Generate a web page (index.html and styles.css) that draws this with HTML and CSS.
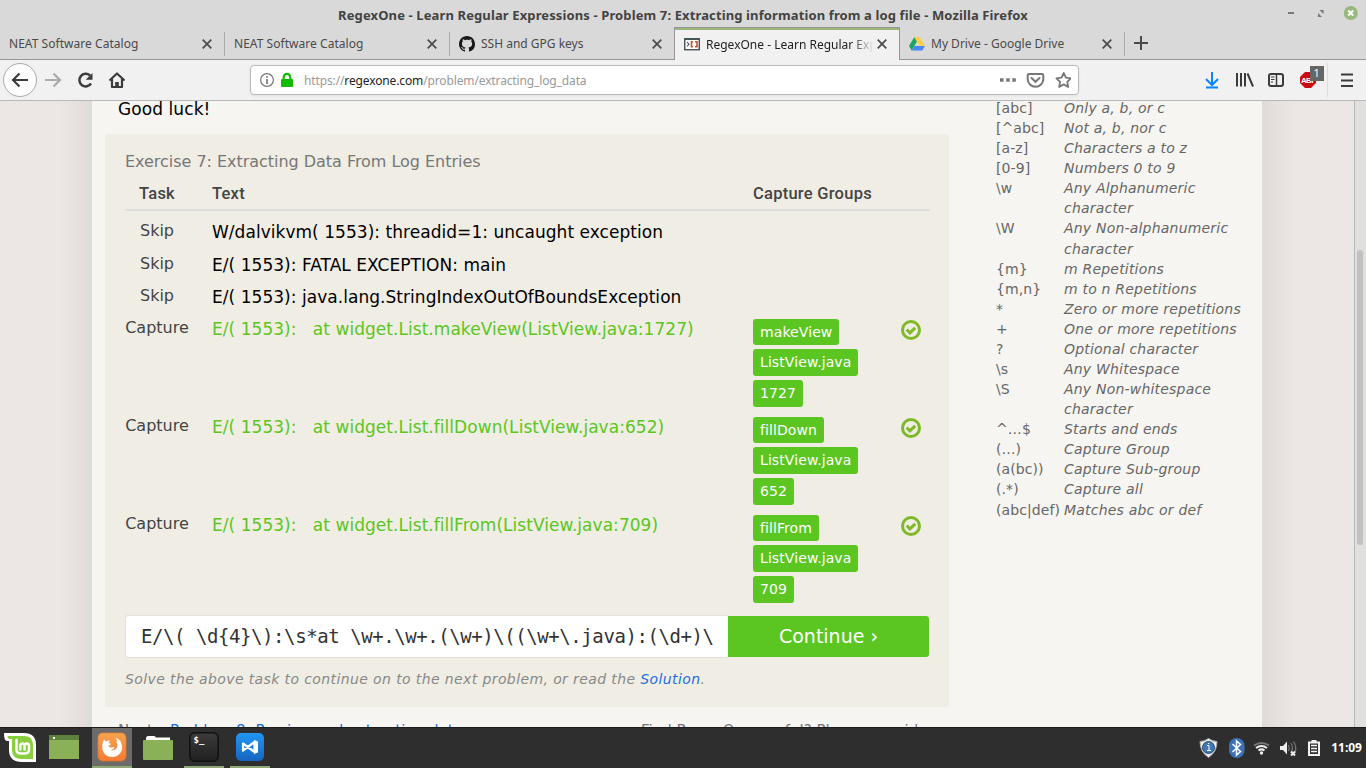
FILE: index.html
```html
<!DOCTYPE html>
<html lang="en">
<head>
<meta charset="utf-8">
<title>RegexOne - Learn Regular Expressions</title>
<link rel="stylesheet" href="styles.css">
</head>
<body>
<header class="titlebar">
  <span class="window-title">RegexOne - Learn Regular Expressions - Problem 7: Extracting information from a log file - Mozilla Firefox</span>
  <svg class="window-buttons" width="76" height="20" viewBox="0 0 76 20"><path d="M0 10.500h6" transform="translate(0 -.5)" stroke="#777" stroke-width="2"/><path d="M30 14v-4l4 4zM35.500 7v4l-4-4z" fill="#777"/><circle cx="62.800" cy="10" r="7" fill="#9ab87c"/><path d="M60.200 7.500l5 5m0-5l-5 5" stroke="#fff" stroke-width="1.900"/></svg>
</header>
<nav class="tabs">
  <div class="tab"><span class="tab-label catalog">NEAT Software Catalog</span><svg class="close" viewBox="0 0 10 10"><path d="M.7.7l8.600 8.600m0-8.600L.7 9.300"/></svg></div>
  <div class="tab"><span class="tab-label catalog">NEAT Software Catalog</span><svg class="close" viewBox="0 0 10 10"><path d="M.7.7l8.600 8.600m0-8.600L.7 9.300"/></svg></div>
  <div class="tab before-active"><svg class="favicon" viewBox="0 0 16 16"><path fill="#191717" d="M8 0C3.580 0 0 3.580 0 8c0 3.540 2.290 6.530 5.470 7.590.4.070.55-.17.55-.38 0-.19-.01-.82-.01-1.490-2.010.37-2.530-.49-2.690-.94-.09-.23-.48-.94-.82-1.130-.28-.15-.68-.52-.01-.53.63-.01 1.080.58 1.230.82.72 1.210 1.870.87 2.330.66.070-.52.280-.87.510-1.070-1.780-.2-3.640-.89-3.640-3.950 0-.87.310-1.590.82-2.150-.08-.2-.36-1.020.08-2.120 0 0 .67-.21 2.200.82.64-.18 1.320-.27 2-.27s1.360.09 2 .27c1.530-1.040 2.200-.82 2.200-.82.440 1.100.160 1.920.080 2.120.51.560.82 1.270.82 2.150 0 3.070-1.870 3.750-3.650 3.950.29.250.54.730.54 1.480 0 1.070-.01 1.930-.01 2.200 0 .21.150.46.55.38A8 8 0 0 0 16 8c0-4.420-3.580-8-8-8z"/></svg><span class="tab-label">SSH and GPG keys</span><svg class="close" viewBox="0 0 10 10"><path d="M.7.7l8.600 8.600m0-8.600L.7 9.300"/></svg></div>
  <div class="tab active"><svg class="favicon" viewBox="0 0 16 16"><rect x=".7" y="2.700" width="14.600" height="11" fill="#fff" stroke="#45535b" stroke-width="1.400"/><path d="M0 3h16" stroke="#45535b" stroke-width="2"/><path d="M3 6l2 2.300L3 10.500" fill="none" stroke="#45535b" stroke-width="1.100"/><path d="M9 5.800H7.500v5H9M11 5.800h2v5h-2" fill="none" stroke="#c8502e" stroke-width="1.600"/></svg><span class="tab-label">RegexOne - Learn Regular Expressions</span><svg class="close" viewBox="0 0 10 10"><path d="M.7.7l8.600 8.600m0-8.600L.7 9.300"/></svg></div>
  <div class="tab"><svg class="favicon" viewBox="0 0 16 16"><path d="M5.300 1L0 10l2.700 4.500L8 5.500z" fill="#1da362"/><path d="M5.300 1h5.400L16 10h-5.300z" fill="#ffcf48"/><path d="M5.500 10H16l-2.700 4.500H2.700z" fill="#4688f4"/></svg><span class="tab-label">My Drive - Google Drive</span><svg class="close" viewBox="0 0 10 10"><path d="M.7.7l8.600 8.600m0-8.600L.7 9.300"/></svg></div>
  <svg class="new-tab" viewBox="0 0 14 14"><path d="M7 0v14M0 7h14" stroke="#4a4a4a" stroke-width="2"/></svg>
</nav>
<div class="toolbar">
  <svg class="nav-left" width="130" height="40" viewBox="0 0 130 40" fill="none" stroke="#3c3c3c" stroke-width="2.200"><circle cx="20" cy="20" r="16.500" fill="#fcfcfc" stroke="#aaa" stroke-width="1"/><path d="M28 20H13m6.500-6.500L13 20l6.500 6.500"/><path d="M45 20h15m-6.500-6.500L60 20l-6.500 6.500" stroke="#ababab"/><path d="M91 23.500a6.300 6.300 0 1 1-1-8" stroke-width="2.500"/><path d="M92.500 13v6.800h-6.800z" fill="#3c3c3c" stroke="none"/><path d="M109.500 20.500l7.500-7 7.500 7M112 19v8h10v-8" stroke-linejoin="round"/><path d="M117 27v-5" stroke-width="3.600"/></svg>
  <div class="urlbar">
    <svg width="36" height="20" viewBox="0 0 36 20"><circle cx="7" cy="10" r="6.400" fill="none" stroke="#777" stroke-width="1.200"/><path d="M7 9v5M7 6v1.800" stroke="#777" stroke-width="1.700"/><path d="M23.700 10V7.200a3.300 3.300 0 0 1 6.600 0V10" fill="none" stroke="#12bc00" stroke-width="2.200"/><rect x="21" y="9" width="12" height="8" rx="1" fill="#12bc00"/></svg>
    <span class="url">https://<b>regexone.com</b>/problem/extracting_log_data</span>
    <svg class="url-actions" width="74" height="20" viewBox="0 0 74 20" fill="none" stroke="#777" stroke-width="2"><g transform="translate(2)"><path d="M1 10h3.500M7.200 10h3.500M13.300 10h3.500" stroke-width="3.500"/><path d="M30 4h13q1.300 0 1.300 1.300V9a7.800 7.800 0 0 1-15.600 0V5.300Q28.700 4 30 4z"/><path d="M32.500 8l4 3.800 4-3.800" stroke-linecap="round"/><path d="M64.700 3l2.200 4.600 5.100.7-3.700 3.500.9 5.100-4.500-2.500-4.500 2.500.9-5.100-3.700-3.500 5.100-.7z" stroke-width="1.800" stroke-linejoin="round"/></g></svg>
  </div>
  <svg class="nav-right" width="162" height="40" viewBox="0 0 162 40" fill="none" stroke="#3c3c3c"><path d="M8 12v13M2 19l6 6 6-6M2 27.500h12" stroke="#0a84ff" stroke-width="2"/><path d="M34 13v13.500M38 13v13.500M42 13v13.500M44.500 13.500l5.500 13" stroke-width="2" transform="translate(-1)"/><rect x="65" y="14" width="14" height="12" rx="2" stroke-width="2"/><path d="M72.500 14v12" stroke-width="1.500"/><path d="M67 17h3.500M67 19.500h3.500M67 22h2" stroke-width="1"/><path d="M101 12h6l5 5v6l-5 5h-6l-5-5v-6z" fill="#c70d12" stroke="none"/><text x="97" y="23" class="abp">ABP</text><rect x="106" y="6" width="14" height="15" fill="#666" stroke="none"/><text x="109.500" y="17" class="badge">1</text><path d="M123.500 3v34" stroke="#ddd"/><path d="M137 14.500h12M137 20.500h12M137 26h12" stroke-width="2"/></svg>
</div>
<main class="viewport">
  <div class="page">
    <section class="lesson">
      <p class="luck">Good luck!</p>
      <div class="exercise">
        <h2 class="exercise-title">Exercise 7: Extracting Data From Log Entries</h2>
        <div class="row head"><span class="task">Task</span><span class="entry">Text</span><span class="groups">Capture Groups</span></div>
        <div class="rows">
          <div class="row skip"><span class="task">Skip</span><span class="entry">W/dalvikvm( 1553): threadid=1: uncaught exception</span></div>
          <div class="row skip"><span class="task">Skip</span><span class="entry">E/( 1553): FATAL EXCEPTION: main</span></div>
          <div class="row skip"><span class="task">Skip</span><span class="entry">E/( 1553): java.lang.StringIndexOutOfBoundsException</span></div>
          <div class="row capture"><span class="task">Capture</span><span class="entry">E/( 1553):&nbsp;&nbsp; at widget.List.makeView(ListView.java:1727)</span><div class="groups"><span>makeView</span><span>ListView.java</span><span>1727</span></div><svg class="check" viewBox="0 0 20 20"><circle cx="10" cy="10" r="8.500"/><path d="M5.700 9.500l3.200 3.300 5.300-5"/></svg></div>
          <div class="row capture"><span class="task">Capture</span><span class="entry">E/( 1553):&nbsp;&nbsp; at widget.List.fillDown(ListView.java:652)</span><div class="groups"><span>fillDown</span><span>ListView.java</span><span>652</span></div><svg class="check" viewBox="0 0 20 20"><circle cx="10" cy="10" r="8.500"/><path d="M5.700 9.500l3.200 3.300 5.300-5"/></svg></div>
          <div class="row capture"><span class="task">Capture</span><span class="entry">E/( 1553):&nbsp;&nbsp; at widget.List.fillFrom(ListView.java:709)</span><div class="groups"><span>fillFrom</span><span>ListView.java</span><span>709</span></div><svg class="check" viewBox="0 0 20 20"><circle cx="10" cy="10" r="8.500"/><path d="M5.700 9.500l3.200 3.300 5.300-5"/></svg></div>
        </div>
        <div class="answer"><div class="pattern">E/\( \d{4}\):\s*at \w+.\w+.(\w+)\((\w+\.java):(\d+)\</div><div class="continue">Continue ›</div></div>
        <p class="hint">Solve the above task to continue on to the next problem, or read the <a>Solution</a>.</p>
      </div>
      <div class="footer"><span>Next – <a>Problem 8: Parsing and extracting data</a></span><span class="donate">Find RegexOne useful? Please consider</span></div>
    </section>
    <aside class="notes">
      <span>[abc]</span><i>Only a, b, or c</i>
      <span>[^abc]</span><i>Not a, b, nor c</i>
      <span>[a-z]</span><i>Characters a to z</i>
      <span>[0-9]</span><i>Numbers 0 to 9</i>
      <span>\w</span><i>Any Alphanumeric<br>character</i>
      <span>\W</span><i>Any Non-alphanumeric<br>character</i>
      <span>{m}</span><i>m Repetitions</i>
      <span>{m,n}</span><i>m to n Repetitions</i>
      <span>*</span><i>Zero or more repetitions</i>
      <span>+</span><i>One or more repetitions</i>
      <span>?</span><i>Optional character</i>
      <span>\s</span><i>Any Whitespace</i>
      <span>\S</span><i>Any Non-whitespace<br>character</i>
      <span>^…$</span><i>Starts and ends</i>
      <span>(…)</span><i>Capture Group</i>
      <span>(a(bc))</span><i>Capture Sub-group</i>
      <span>(.*)</span><i>Capture all</i>
      <span>(abc|def)</span><i>Matches abc or def</i>
    </aside>
  </div>
  <div class="scrollbar"><div class="thumb"></div></div>
</main>
<footer class="taskbar">
  <div class="launch mint"><svg width="34" height="32" viewBox="0 0 34 32"><path d="M1 1h20q12 0 12 12v17H19Q6 30 6 18V9H4Q1 9 1 1z" fill="#fff"/><path d="M4.500 4H21q9 0 9 9v14H19Q9 27 9 18V7H7Q4.500 7 4.500 4z" fill="#87cf3e"/><path d="M13.500 8v9.500q0 4 4 4h4.500q4 0 4-4V14q0-2.500-2.200-2.500T21.600 14v3.500m0-3.500q0-2.500-2.200-2.500T17.300 14v3.500" fill="none" stroke="#fff" stroke-width="2.400" stroke-linecap="round"/></svg></div>
  <div class="launch"><svg width="30" height="24" viewBox="0 0 30 24"><path fill="#8ab158" d="M0 0h30v24H0z"/><path fill="#5e803d" d="M0 0h30v5H0z"/><path fill="#fff" d="M4 2h2v2H4z"/></svg></div>
  <div class="launch focused"><svg width="30" height="30" viewBox="0 0 30 30"><defs><linearGradient id="fx" x2="0" y2="1"><stop stop-color="#f7a34e"/><stop offset="1" stop-color="#f57b34"/></linearGradient></defs><rect x=".7" y=".7" width="28.600" height="28.600" rx="5" fill="url(#fx)" stroke="#a96b3e" stroke-width=".8"/><path d="M7 7.500l2 2q2-1.300 4-.8-1.500 1-1.300 2.500l2.300.3q0 1.500-2.500 2.200.8 2.600 4 1.600l2.200-.2q-.8 2.700-4 3.200 5 .8 6.500-3.200 1-3-1-6.100l1.200.6q-.5-2-1.900-3.600Q23.500 7 24.500 12q1.800 5-1.200 9T15 25q-7 0-9.300-6.500Q4.500 12.500 7 7.500z" fill="#fff"/></svg></div>
  <div class="launch"><svg width="30" height="25" viewBox="0 0 30 25"><path d="M3 4V2.500L4.500 1h7L13 2.500h14V6H3z" fill="#fff"/><rect y="5" width="30" height="20" rx="1" fill="#8ab158"/></svg></div>
  <div class="launch running"><svg width="30" height="30" viewBox="0 0 30 30"><defs><linearGradient id="tm" x2="0" y2="1"><stop stop-color="#3b3b3b"/><stop offset="1" stop-color="#202020"/></linearGradient></defs><rect x=".8" y=".8" width="28.400" height="28.400" rx="5" fill="url(#tm)" stroke="#111" stroke-width="1.500"/><text x="4.500" y="10.500" class="prompt">$_</text></svg></div>
  <div class="launch running"><svg width="30" height="30" viewBox="0 0 30 30"><defs><linearGradient id="vs" x2="0" y2="1"><stop stop-color="#2196f3"/><stop offset="1" stop-color="#1565c0"/></linearGradient></defs><rect x="1" y="1" width="28" height="28" rx="5" fill="url(#vs)"/><path d="M8 11.500l11.500 8.500V10L8 18.500z" fill="none" stroke="#fff" stroke-width="2.200" stroke-linejoin="round"/><path d="M19 8l4 1.500v11L19 22z" fill="#fff"/></svg></div>
  <div class="tray"><svg width="126" height="30" viewBox="0 0 126 30"><path d="M10.500 5.500q4 3 8.500 3Q19 19 10.500 24.500 2 19 2 8.500q4.500 0 8.500-3z" fill="#eee" stroke="#aaa"/><circle cx="10.500" cy="14.500" r="6" fill="#4177b8" stroke="#26466e"/><path d="M9 12.500h2v5M9 17.500h4M10 10.500h1.200" stroke="#fff" fill="none"/><rect x="31" y="5" width="15.500" height="20" rx="7.500" fill="#3a72b5"/><path d="M34.500 11l8 7.500-4 3.500V8l4 3.500-8 7.500" fill="none" stroke="#fff" stroke-width="1.500"/><g fill="none" stroke="#eee" stroke-width="2"><path d="M56 12.500q7.500-5 15 0" stroke="#777"/><path d="M58 15q5.500-4 11 0M60.500 17.500q3-2.300 6 0"/></g><circle cx="63.500" cy="20" r="1.700" fill="#eee"/><path d="M82 13h3l4-4.500v13L85 17h-3z" fill="#eee"/><path d="M90.500 12q1.500 3 0 6M93 10q3 5 0 9.500M95.500 8.500q4 6 1 12" fill="none" stroke="#777" stroke-width="1.200"/><path d="M93 18.500l4 4m0-4l-4 4" stroke="#eee" stroke-width="2"/><path d="M111 9.500h10v12.500h-10zM113.500 8h5" fill="none" stroke="#f2f2f2" stroke-width="2"/><path d="M113 12.500h6M113 15.500h6M113 18.500h6" stroke="#f2f2f2" stroke-width="1.300"/></svg><span class="clock">11:09</span></div>
</footer>
</body>
</html>
```

FILE: styles.css
```css
* { box-sizing: border-box; }
body { margin: 0; width: 1366px; height: 768px; overflow: hidden; display: flex; flex-direction: column; font-family: "DejaVu Sans", sans-serif; background: #f6f5f1; }
svg { display: block; flex: none; }
p, h2 { margin: 0; font-weight: normal; }
a { color: #1a6fe0; }

.titlebar { height: 27px; flex: none; background: #d9d9d9; position: relative; text-align: center; font: bold 13px/30px "Noto Sans", sans-serif; letter-spacing: .12px; color: #434343; }
.window-title { white-space: nowrap; }
.window-buttons { position: absolute; left: 1288px; top: 3px; }

.tabs { height: 33px; flex: none; display: flex; background: linear-gradient(#969696, #969696) 0 100% / 100% 1px no-repeat #d9d9d9; font: 12px/33px "Noto Sans", sans-serif; color: #4a4a4a; }
.tab { width: 225px; padding: 0 13px 0 9px; display: flex; align-items: center; background: linear-gradient(#acacac, #acacac) 100% 5px / 1px 24px no-repeat; }
.tab.before-active { background: none; }
.tab.active { width: 226px; margin-left: -1px; padding: 0 12px 0 9px; background: #f1f1f1; border: solid #969696; border-width: 1px 1px 0; box-shadow: inset 0 2px #9ab87c; color: #222; }
.tab.active + .tab { padding-left: 9px; }
.tab-label { flex: 1; overflow: hidden; white-space: nowrap; }
.tab-label.catalog { letter-spacing: .04px; }
.active .tab-label { margin-right: 2px; -webkit-mask-image: linear-gradient(90deg, #000 145px, transparent 168px); mask-image: linear-gradient(90deg, #000 145px, transparent 168px); }
.favicon { width: 16px; height: 16px; margin-right: 6px; }
.close { width: 10px; height: 10px; fill: none; stroke: #4a4a4a; stroke-width: 1.7; }
.new-tab { width: 14px; height: 14px; margin: 9px 0 0 9px; }

.toolbar { height: 41px; flex: none; display: flex; background: #f1f1f1; border-bottom: 1px solid #b8b8b8; }
.urlbar { width: 829px; height: 30px; margin: 5px 0 0 120px; padding: 0 7px 0 9px; display: flex; align-items: center; background: #fff; border: 1px solid #b8b8b8; border-radius: 4px; box-shadow: 0 1px 3px #0001; font: 12px/28px "Noto Sans", sans-serif; letter-spacing: -.13px; color: #999; }
.url { margin-left: 8px; padding-top: 1px; flex: 1; }
.url b { font-weight: normal; color: #222; }
.nav-right { margin-left: 125px; }
.abp { font: bold 8px "Liberation Sans", sans-serif; letter-spacing: -.7px; fill: #fff; stroke: none; }
.badge { font: 11px "Noto Sans", sans-serif; fill: #fff; stroke: none; }

.viewport { height: 626px; flex: none; display: flex; justify-content: space-between; overflow: hidden; background: linear-gradient(90deg, #ece7e4 60px, #e1dbd8 92px, #e1dbd8 1262px, #ece7e4 1294px); }
.page { width: 1170px; margin-left: 92px; padding-left: 13px; display: flex; background: #f6f5f1; }
.lesson { width: 844px; }
.luck { height: 33px; padding-left: 13px; font-size: 17px; line-height: 17px; letter-spacing: .08px; color: #000; }
.exercise { height: 573px; padding: 15px 19px 0 20px; background: #f0ede4; border-radius: 3px; }
.exercise-title { font-size: 16px; line-height: 25px; letter-spacing: -.03px; color: #777; }
.row { display: flex; }
.task { width: 64px; margin-right: 23px; text-align: center; white-space: nowrap; }
.entry { width: 541px; white-space: nowrap; }
.row.head { height: 37px; border-bottom: 2px solid #ddd; font: 500 16.5px/40px Roboto, sans-serif; letter-spacing: .25px; color: #444; }
.rows { padding-top: 4px; }
.row.skip { height: 32.6px; }
.row.capture { height: 98px; }
.rows .task { font-size: 16px; line-height: 31px; color: #444; }
.rows .capture .task { line-height: 29px; }
.rows .entry { font-size: 17px; line-height: 34px; letter-spacing: .04px; color: #000; }
.rows .capture .entry { line-height: 33px; color: #5bc621; }
.capture .groups { width: 148px; padding-top: 6px; display: flex; flex-direction: column; align-items: flex-start; gap: 4px; }
.capture .groups span { height: 26.6px; padding: 0 7px; border-radius: 3px; background: #5bc621; color: #fff; font-size: 14px; line-height: 27px; letter-spacing: .09px; }
.check { width: 20px; height: 20px; margin-top: 7px; fill: none; stroke: #80b928; stroke-width: 3; }
.answer { display: flex; height: 43px; margin-top: 8px; }
.pattern { width: 603px; padding-left: 15px; background: #fff; border: 1px solid #e3e1d9; border-right: 0; border-radius: 3px 0 0 3px; font: 19px/41px "DejaVu Sans Mono", monospace; letter-spacing: -.43px; color: #333; white-space: nowrap; overflow: hidden; }
.continue { width: 201px; height: 41px; margin-top: 1px; background: #5bc621; border-radius: 0 3px 3px 0; color: #fff; text-align: center; font-size: 19px; line-height: 41px; }
.hint { margin-top: 11px; font-size: 14px; font-style: italic; line-height: 21px; letter-spacing: .39px; color: #888; }
.footer { display: flex; padding: 14px 0 0 13px; font-size: 15px; line-height: 20px; color: #777; white-space: nowrap; }
.footer span { width: 523px; }
.footer .donate { width: 290px; }
.notes { margin: -3px 0 0 47px; width: 260px; display: grid; grid-template-columns: 68px 1fr; align-content: start; font-size: 14px; line-height: 20.08px; color: #666; }
.notes i { letter-spacing: .2px; white-space: nowrap; }
.notes span { letter-spacing: .08px; }
.scrollbar { width: 12px; padding: 149px 0 0 2px; border-left: 1px solid #b8b8b8; background: #e0e0df; }
.thumb { width: 6px; height: 295px; border-radius: 3px; background: #c0c2c1; }

.taskbar { height: 41px; flex: none; display: flex; background: #2e2e2e; border-top: 1px solid #1c1c1c; }
.launch { width: 40px; margin-right: 6px; display: flex; align-items: center; justify-content: center; border-bottom: 2px solid transparent; }
.launch:nth-child(2) { margin-left: -2px; }
.launch.focused { margin-left: 2px; background: #6b6b6b; border-color: #8fa876; }
.launch.running { border-color: #8fa876; }
.mint svg { margin-top: 2px; }
.prompt { font: bold 9px "DejaVu Sans Mono", monospace; fill: #fff; }
.tray { margin-left: auto; display: flex; align-items: center; padding-right: 4px; }
.clock { margin-left: 7px; font: bold 12px/40px "Noto Sans", sans-serif; color: #fff; }
```
